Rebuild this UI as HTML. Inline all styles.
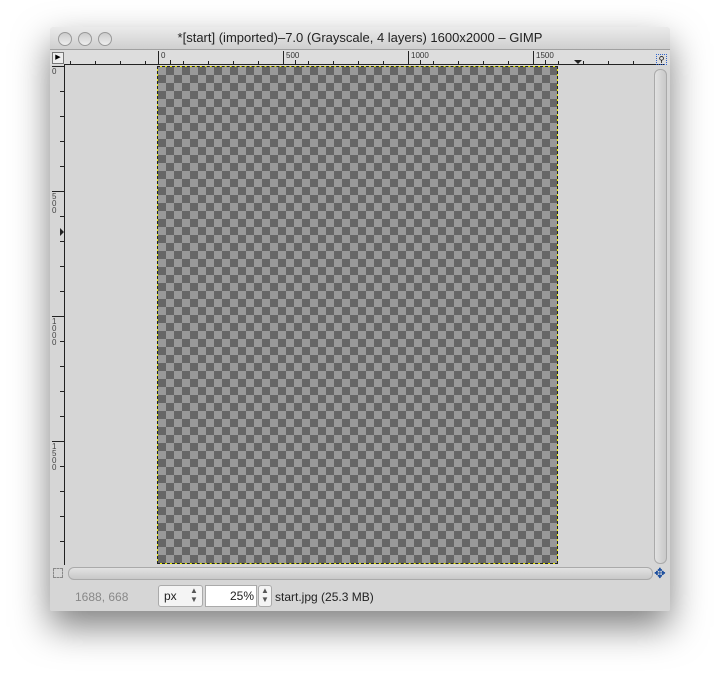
<!DOCTYPE html>
<html><head><style>
body{margin:0;width:719px;height:682px;background:#fff;position:relative;overflow:hidden;font-family:"Liberation Sans",sans-serif}
.win{position:absolute;left:50px;top:27px;width:620px;height:584px;background:#d6d6d6;box-shadow:0 16px 36px rgba(0,0,0,.5);border-radius:4px 4px 2px 2px;overflow:hidden}
.title{position:absolute;left:0;top:0;width:620px;height:22px;background:linear-gradient(#ebebeb,#cfcfcf);border-bottom:1px solid #a0a0a0;text-align:center;font-size:13px;line-height:22px;color:#222}
.btn{position:absolute;top:5px;width:12px;height:12px;border-radius:50%;background:linear-gradient(#ccc,#eee);border:1px solid #999}
.abs{position:absolute}
.canvas{position:absolute;left:107px;top:39px;width:399px;height:496px;border:1px solid #ee0;background-color:#999;background-image:linear-gradient(45deg,#666 25%,transparent 25%,transparent 75%,#666 75%),linear-gradient(45deg,#666 25%,transparent 25%,transparent 75%,#666 75%);background-size:16px 16px;background-position:0 0,8px 8px;}
.canvas:after{content:"";position:absolute;inset:-1px;border:1px dashed #222;}
</style></head><body>
<div class="win">
<div class="title"><span class="btn" style="left:8px"></span><span class="btn" style="left:28px"></span><span class="btn" style="left:48px"></span>*[start] (imported)–7.0 (Grayscale, 4 layers) 1600x2000 – GIMP</div>
<div class="abs" style="left:0;top:23px;width:620px;height:15px;background:#ddd;"></div>
<div class="abs" style="left:14px;top:37px;width:600px;height:1px;background:#222"></div>
<div class="abs" style="left:2px;top:25px;width:10px;height:10px;border:1px solid #777;background:#eee;font-size:7px;line-height:10px;text-align:center">▶</div>
<svg class="abs" style="left:0;top:23px" width="620" height="16">
<g stroke="#222" stroke-width="1">
<path d="M20.5 14v-3M45.5 14v-3M70.5 14v-3M95.5 14v-3M133.5 14v-3M158.5 14v-3M183.5 14v-3M208.5 14v-3M258.5 14v-3M283.5 14v-3M308.5 14v-3M333.5 14v-3M383.5 14v-3M408.5 14v-3M433.5 14v-3M458.5 14v-3M508.5 14v-3M533.5 14v-3M558.5 14v-3M583.5 14v-3M120.5 14v-4M245.5 14v-4M370.5 14v-4M495.5 14v-4"/>
<path d="M108.5 14V1M233.5 14V1M358.5 14V1M483.5 14V1"/>
</g>
<path d="M524 10h8l-4 4z" fill="#222"/>
<text x="111" y="8" font-size="8" fill="#333" font-family="Liberation Sans">0</text>
<text x="236" y="8" font-size="8" fill="#333" font-family="Liberation Sans">500</text>
<text x="361" y="8" font-size="8" fill="#333" font-family="Liberation Sans">1000</text>
<text x="486" y="8" font-size="8" fill="#333" font-family="Liberation Sans">1500</text>
</svg>
<div class="abs" style="left:606px;top:27px;width:9px;height:9px;border:1px dotted #36c;font-size:8px;line-height:9px;text-align:center">⚲</div>
<svg class="abs" style="left:0;top:38px" width="15" height="500">
<path d="M14.5 0v500" stroke="#222"/>
<g stroke="#222"><path d="M2 1.5h12M2 126.5h12M2 251.5h12M2 376.5h12M10 26.5h4M10 51.5h4M10 76.5h4M10 101.5h4M10 151.5h4M10 176.5h4M10 201.5h4M10 226.5h4M10 276.5h4M10 301.5h4M10 326.5h4M10 351.5h4M10 401.5h4M10 426.5h4M10 451.5h4M10 476.5h4"/></g>
<path d="M10 163v8l4-4z" fill="#222"/>
<g font-size="8" fill="#444" font-family="Liberation Sans"><text x="2" y="9">0</text>
<text x="2" y="134">5</text><text x="2" y="141">0</text><text x="2" y="148">0</text>
<text x="2" y="259">1</text><text x="2" y="266">0</text><text x="2" y="273">0</text><text x="2" y="280">0</text>
<text x="2" y="384">1</text><text x="2" y="391">5</text><text x="2" y="398">0</text><text x="2" y="405">0</text></g>
</svg>
<div class="canvas"></div>
<div class="abs" style="left:604px;top:42px;width:11px;height:493px;border:1px solid #aaa;border-radius:6px;background:linear-gradient(90deg,#e2e2e2,#c8c8c8)"></div>
<div class="abs" style="left:18px;top:540px;width:583px;height:11px;border:1px solid #aaa;border-radius:6px;background:linear-gradient(#e2e2e2,#c8c8c8)"></div>
<div class="abs" style="left:3px;top:541px;width:8px;height:8px;border:1px dashed #888"></div>
<div class="abs" style="left:604px;top:538px;font-size:14px;color:#1a4d9e">✥</div>
<div class="abs" style="left:0;top:555px;width:620px;height:29px;background:#d6d6d6;font-size:12px;color:#222">
<span class="abs" style="left:25px;top:8px;color:#888">1688, 668</span>
<div class="abs" style="left:108px;top:3px;width:43px;height:20px;border:1px solid #aaa;border-radius:3px;background:#f4f4f4;"><span class="abs" style="left:5px;top:3px">px</span><span class="abs" style="left:31px;top:0;font-size:8px;color:#555;line-height:9px">▲<br>▼</span></div>
<div class="abs" style="left:155px;top:3px;width:50px;height:20px;border:1px solid #aaa;background:#fff;"><span class="abs" style="right:2px;top:3px">25%</span></div>
<div class="abs" style="left:208px;top:3px;width:12px;height:20px;border:1px solid #aaa;border-radius:3px;background:#f4f4f4;font-size:8px;color:#555;line-height:9px;text-align:center">▲<br>▼</div>
<span class="abs" style="left:225px;top:8px">start.jpg (25.3 MB)</span>
</div>
</div>
</body></html>
